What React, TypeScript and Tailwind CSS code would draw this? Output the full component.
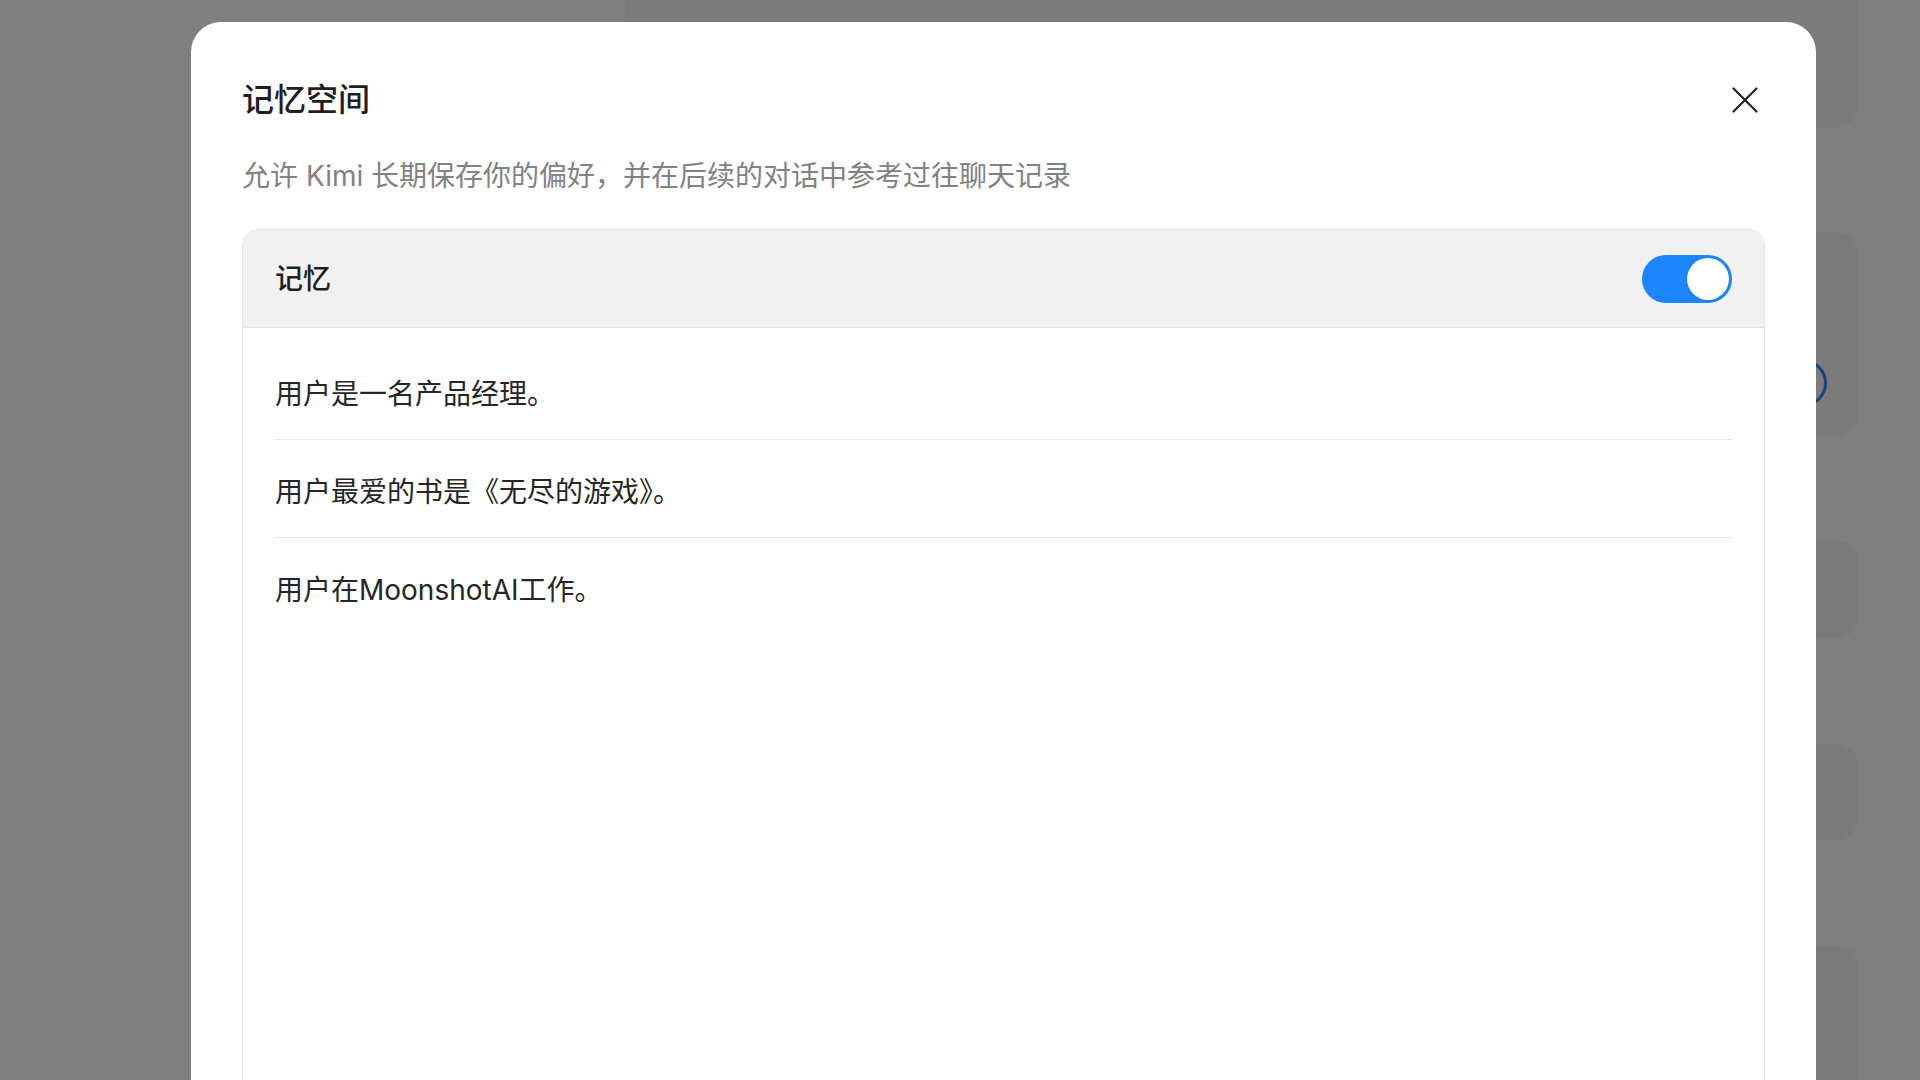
import { useState } from "react";

const memories = [
  "用户是一名产品经理。",
  "用户最爱的书是《无尽的游戏》。",
  "用户在MoonshotAI工作。",
];

function Toggle({ on, onChange }: { on: boolean; onChange: () => void }) {
  return (
    <button
      onClick={onChange}
      className={`flex h-[48px] w-[90px] items-center rounded-full p-[3px] transition ${
        on ? "justify-end bg-[#1b86ff]" : "justify-start bg-[#d9d9d9]"
      }`}
    >
      <span className="block h-[42px] w-[42px] rounded-full bg-white shadow-[0_1px_2px_rgba(0,0,0,0.12)]" />
    </button>
  );
}

export default function App() {
  const [enabled, setEnabled] = useState(true);

  return (
    <div
      className="relative h-[1080px] w-[1920px] overflow-hidden bg-white"
      style={{ fontFamily: 'Inter, "Noto Sans CJK SC", sans-serif' }}
    >
      {/* Page behind the dialog */}
      <div className="flex h-full">
        <div className="w-[625px] shrink-0" />
        <main className="flex w-[1233px] flex-col gap-[106px]">
          <div className="h-[127px] shrink-0 rounded-b-[20px] bg-[#f6f6f6]" />
          <div className="flex h-[202px] shrink-0 items-start justify-end rounded-[20px] bg-[#f6f6f6] pr-[31px] pt-[126px]">
            <span className="block h-[48px] w-[48px] rounded-full border-[3px] border-[#2f8cff]" />
          </div>
          <div className="h-[97px] shrink-0 rounded-[20px] bg-[#f6f6f6]" />
          <div className="h-[96px] shrink-0 rounded-[20px] bg-[#f6f6f6]" />
          <div className="h-[200px] shrink-0 rounded-[20px] bg-[#f6f6f6]" />
        </main>
      </div>

      {/* Overlay */}
      <div className="absolute inset-0 bg-black/50" />

      {/* Dialog */}
      <div className="absolute left-[191px] top-[22px] flex h-[1140px] w-[1625px] flex-col rounded-[30px] bg-white px-[51px] pt-[56px]">
        <div className="flex items-center justify-between">
          <h2 className="text-[32px] font-medium leading-[44px] text-[#1f1f1f]">
            记忆空间
          </h2>
          <button className="flex h-[40px] w-[40px] items-center justify-center text-[#222]">
            <svg width="26" height="26" viewBox="0 0 26 26" fill="none">
              <path
                d="M1.5 1.5L24.5 24.5M24.5 1.5L1.5 24.5"
                stroke="currentColor"
                strokeWidth="2.2"
                strokeLinecap="round"
              />
            </svg>
          </button>
        </div>

        <p className="mt-[34px] text-[28px] leading-[40px] text-[#828282]">
          允许 Kimi 长期保存你的偏好，并在后续的对话中参考过往聊天记录
        </p>

        <div className="mt-[33px] flex flex-1 flex-col overflow-hidden rounded-[16px] border border-[#e3e3e3]">
          <div className="flex h-[98px] shrink-0 items-center justify-between border-b border-[#e3e3e3] bg-[#f1f1f1] px-[32px]">
            <span className="text-[28px] font-medium leading-[40px] text-[#1f1f1f]">
              记忆
            </span>
            <Toggle on={enabled} onChange={() => setEnabled(!enabled)} />
          </div>

          <ul className="px-[32px] pt-[14px]">
            {memories.map((m) => (
              <li
                key={m}
                className="border-b border-[#e6e6e6] pb-[25px] pt-[32px] text-[28px] leading-[40px] text-[#262626] last:border-b-0"
              >
                {m}
              </li>
            ))}
          </ul>
        </div>
      </div>
    </div>
  );
}
